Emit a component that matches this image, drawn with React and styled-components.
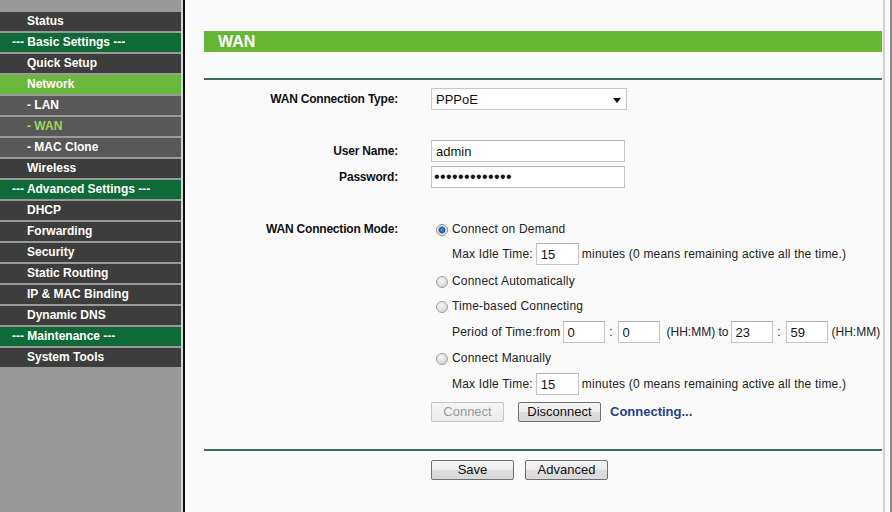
import styled, { createGlobalStyle } from "styled-components";

const GlobalStyle = createGlobalStyle`
  html, body, #root {
    margin: 0;
    padding: 0;
    height: 100%;
  }
  body {
    font-family: "Liberation Sans", Arial, sans-serif;
    font-size: 12px;
    overflow: hidden;
    background: #fafafa;
  }
`;

const menu = [
  { label: "Status", kind: "main" },
  { label: "--- Basic Settings ---", kind: "section" },
  { label: "Quick Setup", kind: "main" },
  { label: "Network", kind: "main", active: true },
  { label: "- LAN", kind: "sub" },
  { label: "- WAN", kind: "sub", active: true },
  { label: "- MAC Clone", kind: "sub" },
  { label: "Wireless", kind: "main" },
  { label: "--- Advanced Settings ---", kind: "section" },
  { label: "DHCP", kind: "main" },
  { label: "Forwarding", kind: "main" },
  { label: "Security", kind: "main" },
  { label: "Static Routing", kind: "main" },
  { label: "IP & MAC Binding", kind: "main" },
  { label: "Dynamic DNS", kind: "main" },
  { label: "--- Maintenance ---", kind: "section" },
  { label: "System Tools", kind: "main" },
];

const itemBg = ({ $kind, $active }) => {
  if ($kind === "section") return "#0e6a36";
  if ($kind === "sub") return "#585858";
  return $active ? "#6ab83b" : "#3d3d3d";
};

const itemColor = ({ $kind, $active }) => {
  if ($kind === "sub" && $active) return "#a3d35a";
  return "#ffffff";
};

const App = () => {
  return (
    <>
      <GlobalStyle />
      <Page>
        <Sidebar>
          {menu.map((m) => (
            <MenuItem key={m.label} $kind={m.kind} $active={m.active}>
              {m.label}
            </MenuItem>
          ))}
        </Sidebar>
        <Divider />
        <Main>
          <Panel>
            <TitleBar>WAN</TitleBar>
            <Rule $mt={26} />

            <Row $mt={8}>
              <Label>WAN Connection Type:</Label>
              <Value>
                <Select>
                  <span>PPPoE</span>
                  <Arrow />
                </Select>
              </Value>
            </Row>

            <Row $mt={30}>
              <Label>User Name:</Label>
              <Value>
                <TextInput $w={194} defaultValue="admin" readOnly />
              </Value>
            </Row>
            <Row $mt={4}>
              <Label>Password:</Label>
              <Value>
                <PasswordInput type="password" defaultValue="aaaaaaaaaaaaa" readOnly />
              </Value>
            </Row>

            <Row $mt={30}>
              <Label>WAN Connection Mode:</Label>
              <Value>
                <Radio $checked />
                Connect on Demand
              </Value>
            </Row>
            <Row $mt={3}>
              <span />
              <Value $indent>
                Max Idle Time:
                <TextInput $w={43} $ml={3} defaultValue="15" readOnly />
                <Note>minutes (0 means remaining active all the time.)</Note>
              </Value>
            </Row>
            <Row $mt={5}>
              <span />
              <Value>
                <Radio />
                Connect Automatically
              </Value>
            </Row>
            <Row $mt={3}>
              <span />
              <Value>
                <Radio />
                Time-based Connecting
              </Value>
            </Row>
            <Row $mt={4}>
              <span />
              <Value $indent>
                Period of Time:from
                <TextInput $w={42} $ml={2} defaultValue="0" readOnly />
                <Colon>:</Colon>
                <TextInput $w={42} defaultValue="0" readOnly />
                <Note $ml={7} $plain>(HH:MM) to</Note>
                <TextInput $w={42} $ml={2} defaultValue="23" readOnly />
                <Colon>:</Colon>
                <TextInput $w={42} defaultValue="59" readOnly />
                <Note $ml={4} $plain>(HH:MM)</Note>
              </Value>
            </Row>
            <Row $mt={4}>
              <span />
              <Value>
                <Radio />
                Connect Manually
              </Value>
            </Row>
            <Row $mt={4}>
              <span />
              <Value $indent>
                Max Idle Time:
                <TextInput $w={43} $ml={3} defaultValue="15" readOnly />
                <Note>minutes (0 means remaining active all the time.)</Note>
              </Value>
            </Row>
            <Row $mt={5}>
              <span />
              <Value>
                <Button $w={73} disabled>
                  Connect
                </Button>
                <Button $w={83} $ml={14}>
                  Disconnect
                </Button>
                <Status>Connecting...</Status>
              </Value>
            </Row>

            <Rule $mt={27} />

            <Row $mt={7}>
              <span />
              <Value>
                <Button $w={83}>Save</Button>
                <Button $w={83} $ml={11}>
                  Advanced
                </Button>
              </Value>
            </Row>
          </Panel>
        </Main>
      </Page>
    </>
  );
};

const Page = styled.div`
  display: flex;
  height: 100vh;
  width: 100vw;
`;

const Sidebar = styled.nav`
  width: 181px;
  flex-shrink: 0;
  background: #999999;
  border-right: 2px solid #d6d6d6;
  padding-top: 12px;
  display: flex;
  flex-direction: column;
  gap: 2px;
`;

const MenuItem = styled.div`
  height: 19px;
  line-height: 19px;
  background: ${itemBg};
  color: ${itemColor};
  font-weight: bold;
  font-size: 12px;
  padding-left: ${({ $kind }) => ($kind === "section" ? "12px" : "27px")};
  white-space: nowrap;
`;

const Divider = styled.div`
  width: 2px;
  flex-shrink: 0;
  background: #111111;
`;

const Main = styled.main`
  flex: 1;
  background: #fafafa;
  border-right: 2px solid #8a8a8a;
  display: flex;
`;

const Panel = styled.div`
  flex: 1;
  padding: 31px 1px 0 19px;
  margin-right: 5px;
  border-right: 2px solid #d2d2d2;
  color: #111;
`;

const TitleBar = styled.div`
  height: 21px;
  line-height: 21px;
  background: #66b634;
  color: #ffffff;
  font-weight: bold;
  font-size: 16px;
  padding-left: 14px;
`;

const Rule = styled.div`
  height: 2px;
  margin-top: ${({ $mt }) => $mt}px;
  background: #3a6f52;
`;

const Row = styled.div`
  display: grid;
  grid-template-columns: 194px 1fr;
  column-gap: 33px;
  align-items: center;
  height: 22px;
  margin-top: ${({ $mt }) => $mt || 0}px;
`;

const Label = styled.div`
  text-align: right;
  font-weight: bold;
  font-size: 12px;
  letter-spacing: -0.2px;
  color: #111;
`;

const Value = styled.div`
  display: flex;
  align-items: center;
  font-size: 12px;
  letter-spacing: 0.2px;
  color: #222;
  white-space: nowrap;
  padding-left: ${({ $indent }) => ($indent ? "21px" : "0")};
`;

const Select = styled.div`
  width: 196px;
  height: 22px;
  box-sizing: border-box;
  border: 1px solid #c8c8c8;
  background: #ffffff;
  display: flex;
  align-items: center;
  justify-content: space-between;
  padding: 0 5px 0 4px;
  font-size: 13px;
  letter-spacing: 0;
  color: #111;
`;

const Arrow = styled.span`
  width: 0;
  height: 0;
  border-left: 4px solid transparent;
  border-right: 4px solid transparent;
  border-top: 5px solid #111;
  margin-top: 2px;
`;

const TextInput = styled.input`
  width: ${({ $w }) => $w}px;
  height: 22px;
  box-sizing: border-box;
  margin: 0 0 0 ${({ $ml }) => $ml || 0}px;
  border: 1px solid #c4c4c4;
  border-top-color: #b0b0b0;
  background: #ffffff;
  padding: 0 4px;
  font-family: "Liberation Sans", Arial, sans-serif;
  font-size: 13px;
  letter-spacing: 0;
  color: #111;
  outline: none;
`;

const PasswordInput = styled(TextInput)`
  width: 194px;
  padding: 0 2px;
  font-size: 16px;
  letter-spacing: 0.4px;
`;

const Note = styled.span`
  margin-left: ${({ $ml }) => ($ml === undefined ? 3 : $ml)}px;
  letter-spacing: ${({ $plain }) => ($plain ? "0" : "0.2px")};
`;

const Colon = styled.span`
  width: 13px;
  text-align: center;
`;

const Radio = styled.span`
  width: 12px;
  height: 12px;
  box-sizing: border-box;
  border-radius: 50%;
  margin: 2px 4px 0 5px;
  border: 1px solid ${({ $checked }) => ($checked ? "#7d8fa0" : "#a0a0a0")};
  background: ${({ $checked }) =>
    $checked
      ? "radial-gradient(circle at 50% 50%, #6aa5d8 0, #1f5d96 2.5px, #2b6aa3 3.2px, #e6e6e6 3.8px, #f4f4f4 100%)"
      : "radial-gradient(circle at 40% 35%, #f6f6f6 0, #dcdcdc 60%, #c8c8c8 100%)"};
  flex-shrink: 0;
`;

const Button = styled.button`
  width: ${({ $w }) => $w}px;
  height: 20px;
  margin: 1px 0 0 ${({ $ml }) => $ml || 0}px;
  padding: 0;
  box-sizing: border-box;
  font-family: "Liberation Sans", Arial, sans-serif;
  font-size: 13px;
  letter-spacing: 0;
  border-radius: 2px;
  border: 1px solid ${({ disabled }) => (disabled ? "#c6c6c6" : "#707070")};
  color: ${({ disabled }) => (disabled ? "#9a9a9a" : "#111")};
  background: ${({ disabled }) =>
    disabled
      ? "linear-gradient(#f6f6f6, #ececec)"
      : "linear-gradient(#f4f4f4 0%, #ececec 50%, #dcdcdc 51%, #d8d8d8 100%)"};
`;

const Status = styled.span`
  margin-left: 9px;
  font-weight: bold;
  font-size: 13px;
  letter-spacing: 0;
  color: #1f3f92;
`;

export default App;
